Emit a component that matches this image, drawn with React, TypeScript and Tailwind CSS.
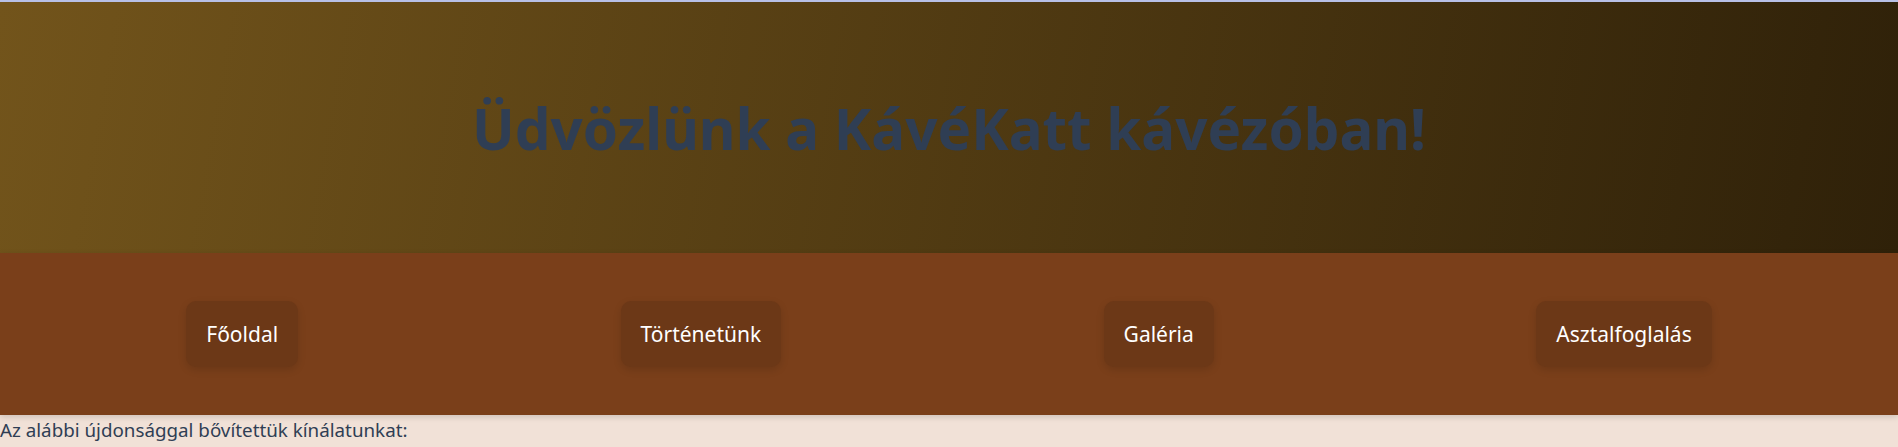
import React from "react"

const links = ["Főoldal", "Történetünk", "Galéria", "Asztalfoglalás"]

export default function App() {
  return (
    <div
      className="w-full min-h-[447px] bg-[#f1e1d7] text-[#2f3e54]"
      style={{ fontFamily: '"Noto Sans", "Open Sans", sans-serif' }}
    >
      <div className="h-[2px] bg-[#b8c0e6]" />
      <header className="h-[251px] flex items-center justify-center bg-[linear-gradient(100deg,#72541b,#2f2109)]">
        <h1 className="text-[56.5px] font-bold text-[#2f3e54] mt-[4px]">
          Üdvözlünk a KávéKatt kávézóban!
        </h1>
      </header>
      <nav className="bg-[#7a3f1a] py-[48px] shadow-[0_2px_6px_rgba(0,0,0,0.15)] relative">
        <ul className="flex items-center justify-around px-[25px]">
          {links.map((item) => (
            <li key={item}>
              <a className="block rounded-[10px] bg-[#6c3817] px-5 py-[17px] text-[21px] leading-[32px] text-white shadow-[0_3px_8px_rgba(0,0,0,0.12)]">
                {item}
              </a>
            </li>
          ))}
        </ul>
      </nav>
      <p className="text-[18.8px] leading-[30px]">
        Az alábbi újdonsággal bővítettük kínálatunkat:
      </p>
    </div>
  )
}
